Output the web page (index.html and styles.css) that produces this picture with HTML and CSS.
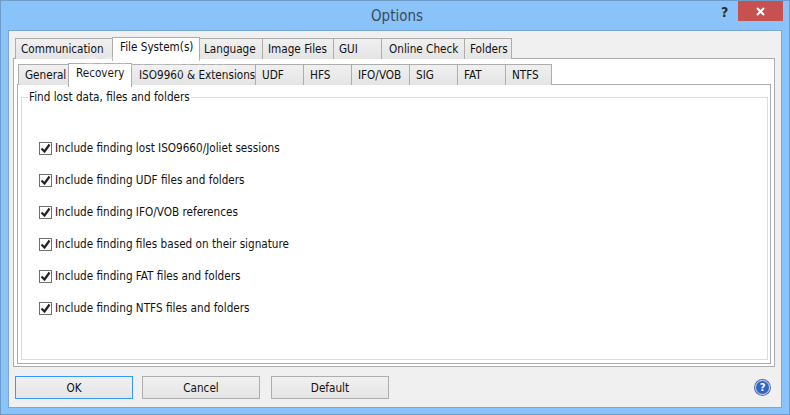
FILE: index.html
```html
<!DOCTYPE html>
<html lang="en">
<head>
<meta charset="utf-8">
<title>Options</title>
<link rel="stylesheet" href="styles.css">
</head>
<body>
<div class="window">
  <header class="titlebar">
    <span class="title">Options</span>
    <span class="help-q">?</span>
    <span class="close"><svg width="9" height="9" viewBox="0 0 9 9"><path d="M1 1l7 7M8 1L1 8" stroke="#fff" stroke-width="2"/></svg></span>
  </header>
  <div class="client">
    <div class="tabs top-tabs">
      <span class="tab w97">Communication</span>
      <span class="tab active w87">File System(s)</span>
      <span class="tab w63">Language</span>
      <span class="tab w71">Image Files</span>
      <span class="tab w48">GUI</span>
      <span class="tab w83 pad-c">Online Check</span>
      <span class="tab w47">Folders</span>
    </div>
    <div class="outer-panel">
      <div class="tabs inner-tabs">
        <span class="tab w50">General</span>
        <span class="tab active w63">Recovery</span>
        <span class="tab w124">ISO9960 &amp; Extensions</span>
        <span class="tab w48">UDF</span>
        <span class="tab w48">HFS</span>
        <span class="tab w58">IFO/VOB</span>
        <span class="tab w48">SIG</span>
        <span class="tab w48">FAT</span>
        <span class="tab w46">NTFS</span>
      </div>
      <div class="inner-panel">
        <fieldset class="group">
          <legend>Find lost data, files and folders</legend>
          <ul class="options">
            <li><span class="check"><svg width="11" height="11" viewBox="0 0 11 11"><path d="M1.5 5.5l3 3 5-7" fill="none" stroke="#222" stroke-width="2.2"/></svg></span>Include finding lost ISO9660/Joliet sessions</li>
            <li><span class="check"><svg width="11" height="11" viewBox="0 0 11 11"><path d="M1.5 5.5l3 3 5-7" fill="none" stroke="#222" stroke-width="2.2"/></svg></span>Include finding UDF files and folders</li>
            <li><span class="check"><svg width="11" height="11" viewBox="0 0 11 11"><path d="M1.5 5.5l3 3 5-7" fill="none" stroke="#222" stroke-width="2.2"/></svg></span>Include finding IFO/VOB references</li>
            <li><span class="check"><svg width="11" height="11" viewBox="0 0 11 11"><path d="M1.5 5.5l3 3 5-7" fill="none" stroke="#222" stroke-width="2.2"/></svg></span>Include finding files based on their signature</li>
            <li><span class="check"><svg width="11" height="11" viewBox="0 0 11 11"><path d="M1.5 5.5l3 3 5-7" fill="none" stroke="#222" stroke-width="2.2"/></svg></span>Include finding FAT files and folders</li>
            <li><span class="check"><svg width="11" height="11" viewBox="0 0 11 11"><path d="M1.5 5.5l3 3 5-7" fill="none" stroke="#222" stroke-width="2.2"/></svg></span>Include finding NTFS files and folders</li>
          </ul>
        </fieldset>
      </div>
    </div>
    <footer class="actions">
      <button class="btn default">OK</button>
      <button class="btn">Cancel</button>
      <button class="btn">Default</button>
      <span class="help-icon">?</span>
    </footer>
  </div>
  <div class="watermark">SOFTPEDIA</div>
</div>
</body>
</html>
```
FILE: styles.css
```css
* { box-sizing: border-box; }
html, body { margin: 0; padding: 0; }
body {
  width: 790px;
  height: 415px;
  overflow: hidden;
  font-family: "DejaVu Sans Condensed", "DejaVu Sans", sans-serif;
  font-size: 11.65px;
  color: #111;
}
.window {
  position: relative;
  width: 790px;
  height: 415px;
  background: #8ac3f9;
  border: 1px solid #6e9cc9;
  display: flex;
  flex-direction: column;
}
.titlebar {
  position: relative;
  height: 29px;
  flex: none;
  display: flex;
  justify-content: center;
  align-items: center;
  padding-left: 4px;
}
.title {
  font-size: 15px;
  color: #3a4a58;
}
.help-q {
  position: absolute;
  left: 720px;
  top: 3px;
  font-size: 14px;
  font-weight: bold;
  color: #2a2a2a;
}
.close {
  position: absolute;
  left: 737px;
  top: 0;
  width: 45px;
  height: 20px;
  background: #c75050;
  display: flex;
  align-items: center;
  justify-content: center;
}
.client {
  margin: 0 7px 6px 7px;
  flex: 1;
  background: #f0f0f0;
  border: 1px solid #7ba7d4;
  padding: 6px 5px 0 4px;
  display: flex;
  flex-direction: column;
}
.tabs { display: flex; align-items: flex-end; }
.top-tabs { height: 22px; padding-left: 2px; position: relative; z-index: 1; }
.inner-tabs { height: 22px; padding-left: 1px; position: relative; z-index: 1; }
.tab {
  height: 21px;
  background: linear-gradient(#f0f0f0, #e4e4e4);
  border: 1px solid #adadad;
  border-bottom: 0;
  padding: 3px 0 0 5px;
  white-space: nowrap;
  overflow: hidden;
}
.inner-tabs .tab { padding-left: 6px; }
.top-tabs .w63 { padding-left: 4px; }
.tab + .tab { margin-left: -1px; }
.tab.active {
  height: 24px;
  margin-bottom: -2px;
  background: #fff;
  padding-top: 2px;
  position: relative;
  z-index: 2;
}
.top-tabs .tab.active { padding-left: 7px; }
.inner-tabs .tab.active { padding-left: 7px; padding-top: 2px; }
.inner-tabs .w124 { padding-left: 7px; }
.w97 { width: 98px; }
.w87 { width: 88px; }
.w63 { width: 64px; }
.w71 { width: 72px; }
.w48 { width: 49px; }
.w83 { width: 84px; }
.w47 { width: 48px; }
.w50 { width: 51px; }
.w124 { width: 125px; }
.w58 { width: 59px; }
.w46 { width: 47px; }
.pad-c { padding-left: 7px; }
.outer-panel {
  width: 762px;
  height: 309px;
  margin-top: -1px;
  border: 1px solid #adadad;
  background: #fff;
  padding: 4px 3px 2px 3px;
  display: flex;
  flex-direction: column;
}
.inner-panel {
  flex: 1;
  margin-top: -1px;
  border: 1px solid #adadad;
  background: #fff;
  padding: 5px 2px 3px 3px;
  display: flex;
}
.group {
  flex: 1;
  margin: 0;
  padding: 0;
  border: 1px solid #dcdcdc;
  min-width: 0;
}
.group legend {
  padding: 0 1px;
  margin-left: 6px;
  line-height: 14px;
  background: #fff;
}
.options {
  list-style: none;
  margin: 36px 0 0 17px;
  padding: 0;
  display: flex;
  flex-direction: column;
  gap: 16px;
}
.options li {
  height: 16px;
  display: flex;
  align-items: center;
  gap: 3px;
}
.check {
  width: 13px;
  height: 13px;
  flex: none;
  border: 1px solid #707070;
  background: #fff;
  display: flex;
  align-items: center;
  justify-content: center;
}
.actions {
  flex: 1;
  display: flex;
  align-items: flex-start;
  padding: 9px 0 0 2px;
  position: relative;
}
.btn {
  width: 118px;
  height: 23px;
  margin: 0 10px 0 0;
  padding: 0;
  font: inherit;
  color: #111;
  background: linear-gradient(#f0f0f0, #e5e5e5);
  border: 1px solid #adadad;
}
.btn.default { margin-right: 9px; }
.btn + .btn + .btn { margin-left: 1px; }
.btn.default { border-color: #3399ff; }
.help-icon {
  position: absolute;
  left: 742px;
  top: 13px;
  width: 15px;
  height: 15px;
  border-radius: 50%;
  background: #2f66c8;
  border: 1px solid #d6deef;
  box-shadow: 0 0 0 1px #5a6f9d;
  color: #fff;
  font-size: 11px;
  font-weight: bold;
  line-height: 13px;
  text-align: center;
}
.watermark {
  position: absolute;
  left: 82px;
  top: 50px;
  font-family: "Liberation Sans", sans-serif;
  font-size: 24px;
  font-weight: bold;
  letter-spacing: 1px;
  color: rgba(255, 255, 255, 0.22);
  pointer-events: none;
  z-index: 5;
}
```
